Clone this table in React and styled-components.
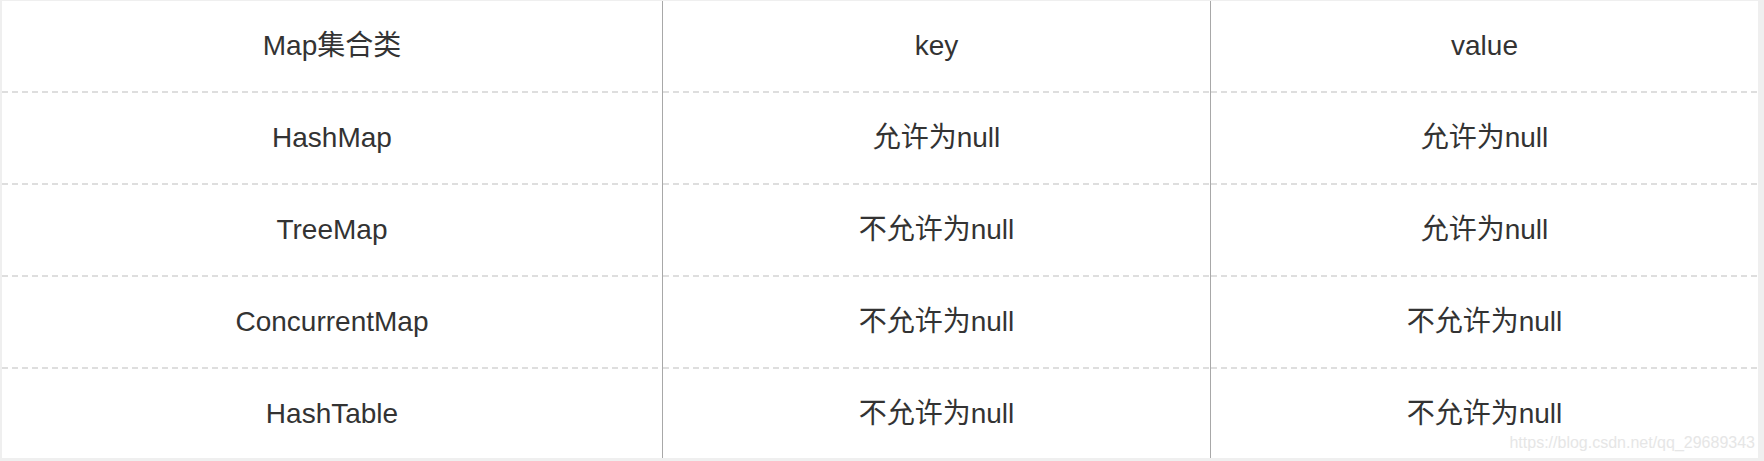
import React from 'react';
import styled, { createGlobalStyle } from 'styled-components';

const GlobalStyle = createGlobalStyle`
    html, body {
        margin: 0;
        padding: 0;
        background: #efefef;
    }
`

const Frame = styled.div`
    position: relative;
    width: 1764px;
    height: 461px;
    box-sizing: border-box;
    padding: 1px 6px 3px 2px;
    background: #efefef;
    font-family: "Liberation Sans", Arial, "Noto Sans CJK SC", sans-serif;
`

const Table = styled.div`
    display: grid;
    grid-template-columns: 660px 548px 548px;
    grid-template-rows: 92px 92px 92px 92px 89px;
    height: 100%;
    background: #fff;
`

const Cell = styled.div`
    display: flex;
    align-items: center;
    justify-content: center;
    font-size: 28px;
    line-height: 1;
    color: #333;
    padding-bottom: ${p => (p.$last ? '0' : '2px')};
    border-left: ${p => (p.$first ? 'none' : '1px solid #a8a8a8')};
    background: ${p => p.$last
        ? 'none'
        : 'repeating-linear-gradient(to right, #dedede 0 6px, transparent 6px 10px) left bottom / 100% 2px no-repeat'};
`

const Watermark = styled.span`
    position: absolute;
    right: 9px;
    bottom: 9px;
    font-size: 16px;
    color: #e6e6e6;
    font-family: "Liberation Sans", Arial, sans-serif;
`

const rows = [
    ['Map集合类', 'key', 'value'],
    ['HashMap', '允许为null', '允许为null'],
    ['TreeMap', '不允许为null', '允许为null'],
    ['ConcurrentMap', '不允许为null', '不允许为null'],
    ['HashTable', '不允许为null', '不允许为null'],
]

function App() {
    return (
        <>
            <GlobalStyle />
            <Frame>
                <Table>
                    {rows.map((row, r) =>
                        row.map((text, c) => (
                            <Cell key={r + '-' + c} $first={c === 0} $last={r === rows.length - 1}>
                                {text}
                            </Cell>
                        ))
                    )}
                </Table>
                <Watermark>https://blog.csdn.net/qq_29689343</Watermark>
            </Frame>
        </>
    )
}

export default App
